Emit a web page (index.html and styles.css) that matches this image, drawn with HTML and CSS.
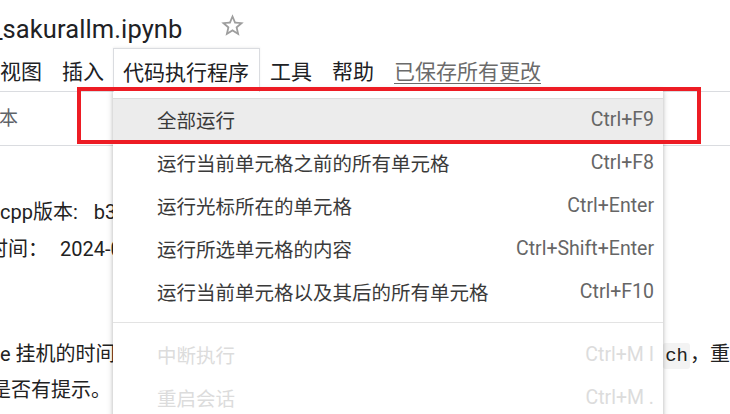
FILE: index.html
```html
<!DOCTYPE html>
<html lang="zh-CN">
<head>
<meta charset="utf-8">
<title>sakurallm.ipynb</title>
<link rel="stylesheet" href="styles.css">
</head>
<body>
<div class="page">
  <header class="titlebar">
    <span class="title">_sakurallm.ipynb</span>
    <svg class="star" viewBox="0 0 24 24" width="27" height="27" aria-hidden="true">
      <path d="M22 9.24l-7.19-.62L12 2 9.19 8.63 2 9.24l5.46 4.73L5.82 21 12 17.27 18.18 21l-1.63-7.03L22 9.24zM12 15.4l-3.76 2.27 1-4.28-3.32-2.88 4.38-.38L12 6.1l1.71 4.04 4.38.38-3.32 2.88 1 4.28L12 15.4z"/>
    </svg>
  </header>
  <nav class="menubar">
    <span class="mitem first">视图</span>
    <span class="mitem">插入</span>
    <span class="mitem open">代码执行程序</span>
    <span class="mitem">工具</span>
    <span class="mitem">帮助</span>
    <span class="mitem saved">已保存所有更改</span>
  </nav>
  <div class="toolbar"><span class="tool">本</span></div>
  <main class="content">
    <p class="para p1">
      <span class="line">cpp版本:<span class="gap">b3259</span></span>
      <span class="line shift">时间：<span class="num">2024-06</span></span>
    </p>
    <p class="para p2">
      <span class="line split"><span>e 挂机的时间过长</span><span class="tail"><code class="code">ch</code>，重</span></span>
      <span class="line shift2">是否有提示。</span>
    </p>
  </main>

  <div class="dropdown">
    <div class="row active"><span>全部运行</span><span class="key">Ctrl+F9</span></div>
    <div class="row"><span>运行当前单元格之前的所有单元格</span><span class="key">Ctrl+F8</span></div>
    <div class="row"><span>运行光标所在的单元格</span><span class="key">Ctrl+Enter</span></div>
    <div class="row"><span>运行所选单元格的内容</span><span class="key">Ctrl+Shift+Enter</span></div>
    <div class="row"><span>运行当前单元格以及其后的所有单元格</span><span class="key">Ctrl+F10</span></div>
    <div class="sep"></div>
    <div class="row disabled"><span>中断执行</span><span class="key">Ctrl+M I</span></div>
    <div class="row disabled"><span>重启会话</span><span class="key">Ctrl+M .</span></div>
  </div>

  <div class="highlight-box"></div>
</div>
</body>
</html>
```
FILE: styles.css
```css
html, body {
  margin: 0;
  padding: 0;
  background: #ffffff;
}

body {
  width: 730px;
  height: 414px;
  overflow: hidden;
  font-family: Roboto, "Noto Sans CJK SC", sans-serif;
  color: #212121;
}

.page {
  position: relative;
  width: 730px;
  height: 414px;
  overflow: hidden;
}

.titlebar {
  height: 48px;
  display: flex;
  align-items: flex-start;
}

.title {
  font-size: 25.5px;
  line-height: 40px;
  padding-top: 9px;
  margin-left: -9px;
  color: #202124;
  letter-spacing: 0.1px;
}

.star {
  fill: #9e9e9e;
  margin-left: 37px;
  margin-top: 12px;
}

.menubar {
  height: 43px;
  display: flex;
  align-items: stretch;
  font-family: "Noto Sans CJK SC", Roboto, sans-serif;
  font-size: 21px;
}

.mitem {
  padding: 0 10px;
  display: flex;
  align-items: center;
  color: #202124;
  white-space: nowrap;
  box-sizing: border-box;
}

.mitem.first {
  margin-left: -10px;
}

.mitem.open {
  position: relative;
  z-index: 3;
  background: #fff;
  border: 1px solid #dadce0;
  border-bottom: none;
  padding: 0 10px 0 9px;
  margin-left: -1px;
  height: 44px;
  box-shadow: 0 -1px 2px rgba(0, 0, 0, 0.06);
}

.mitem.saved {
  color: #6b6b6b;
  text-decoration: underline;
  text-underline-offset: 4px;
  text-decoration-thickness: 1px;
}

.toolbar {
  height: 53px;
  border-top: 1px solid #dadce0;
  border-bottom: 1px solid #dadce0;
  display: flex;
  align-items: center;
}

.tool {
  font-family: "Noto Sans CJK SC", sans-serif;
  font-size: 19px;
  color: #5f6368;
  margin-left: -1px;
  margin-top: -4px;
}

.content {
  font-family: Roboto, "Noto Sans CJK SC", sans-serif;
  font-size: 20px;
  color: #222;
}

.para {
  margin: 0;
}

.p1 {
  margin-top: 48px;
  line-height: 37px;
}

.p2 {
  margin-top: 69px;
  line-height: 34px;
}

.line {
  display: block;
  white-space: nowrap;
}

.gap {
  margin-left: 16px;
}

.num {
  margin-left: 12px;
}

.shift {
  margin-left: -12px;
}

.shift2 {
  margin-left: -9px;
}

.split {
  display: flex;
  justify-content: space-between;
}

.code {
  font-family: "Liberation Mono", monospace;
  font-size: 19px;
  background: #f3f3f3;
  border-radius: 3px;
  padding: 2px 2px;
}

.dropdown {
  position: absolute;
  left: 113px;
  top: 89px;
  width: 550px;
  height: 360px;
  background: #fff;
  z-index: 2;
  padding-top: 9px;
  box-sizing: border-box;
  box-shadow: 0 2px 6px rgba(0, 0, 0, 0.22), 0 0 3px rgba(0, 0, 0, 0.12);
  font-family: Roboto, "Noto Sans CJK SC", sans-serif;
  font-size: 19.5px;
  color: #3a3a3a;
}

.row {
  height: 43px;
  display: flex;
  align-items: center;
  justify-content: space-between;
  padding: 0 9px 0 44px;
  white-space: nowrap;
}

.row .key {
  font-family: Roboto, sans-serif;
  color: #666;
}

.row.active {
  background: #ececec;
  box-shadow: inset 0 1px 0 #dcdcdc;
}

.row.disabled,
.row.disabled .key {
  color: #dcdcdc;
}

.sep {
  height: 1px;
  background: #e3e3e3;
  margin: 9px 0 10px;
}

.highlight-box {
  position: absolute;
  left: 77px;
  top: 87px;
  width: 624px;
  height: 57px;
  box-sizing: border-box;
  border: 4px solid #ed1c24;
  z-index: 5;
}
```
